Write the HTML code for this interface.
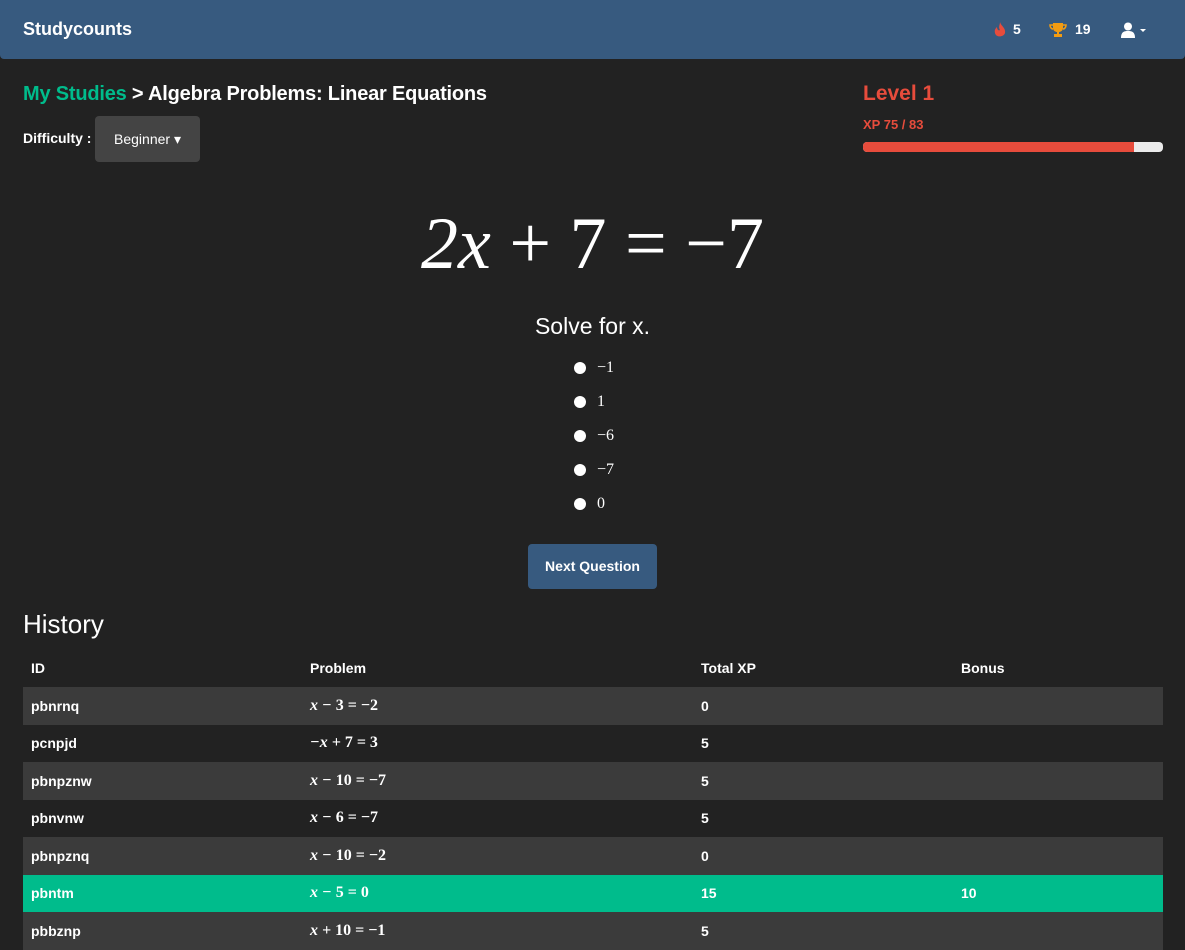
<!DOCTYPE html>
<html><head><meta charset="utf-8"><style>
body{margin:0;background:#222;color:#fff;font-family:"Liberation Sans",sans-serif;width:1185px;height:948px;overflow:hidden;position:relative}
.nav{position:absolute;left:0;top:0;width:1185px;height:59px;background:#375a7f;border-radius:0 0 4px 4px}
.brand{position:absolute;left:23px;top:19px;font-size:18px;font-weight:bold}
.ni{position:absolute;top:21px;font-size:14px;font-weight:bold}
.abs{position:absolute}
.math{font-family:"Liberation Serif",serif}
table{position:absolute;left:23px;top:649px;width:1140px;border-collapse:collapse;font-size:14px;font-weight:bold;table-layout:fixed}
td{height:37.5px;padding:0 8px;box-sizing:border-box}
tr.h td{height:38px}
tr.s td{background:#3b3b3b}
tr.g td{background:#00bc8c}
td.m{font-family:"Liberation Serif",serif;font-style:italic;font-weight:bold;font-size:16px}
.radio{position:absolute;left:574px;width:12px;height:12px;border-radius:50%;background:#fff}
.opt{position:absolute;left:597px;font-family:"Liberation Serif",serif;font-size:16px}
</style></head><body>
<div class="nav">
<div class="brand">Studycounts</div>
<svg class="abs" style="left:994px;top:22px" width="12" height="16" viewBox="0 0 12 16"><path d="M6 0C7 4 12 6 11 11 10 15 2 16 1 11 0 8 2 6 3 5 3 8 5 9 6 8 4 5 6 3 6 0Z" fill="#e74c3c"/></svg>
<div class="ni" style="left:1013px">5</div>
<svg class="abs" style="left:1049px;top:22px" width="18" height="16" viewBox="0 0 18 16"><path d="M4 1H14V6C14 9 11 10 10 10V12H13V15H5V12H8V10C7 10 4 9 4 6Z" fill="#f39c12"/><path d="M4 3H1C1 6 3 7 4 7M14 3H17C17 6 15 7 14 7" stroke="#f39c12" stroke-width="1.6" fill="none"/></svg>
<div class="ni" style="left:1075px">19</div>
<svg class="abs" style="left:1121px;top:22px" width="26" height="16" viewBox="0 0 26 16"><circle cx="7" cy="4.5" r="4" fill="#fff"/><path d="M0 16C0 10 3 9 7 9S14 10 14 16Z" fill="#fff"/><path d="M19 7H25L22 10Z" fill="#fff"/></svg>
</div>
<div class="abs" style="left:23px;top:83px;font-size:20px;font-weight:bold;letter-spacing:-0.2px"><span style="color:#00bc8c">My Studies</span> &gt; Algebra Problems: Linear Equations</div>
<div class="abs" style="left:23px;top:130px;font-size:14px;font-weight:bold">Difficulty :</div>
<div class="abs" style="left:95px;top:116px;width:105px;height:46px;background:#444;border-radius:4px;font-size:14px;line-height:46px;text-align:center">Beginner &#9662;</div>
<div class="abs" style="left:863px;top:82px;font-size:21px;font-weight:bold;color:#e74c3c">Level 1</div>
<div class="abs" style="left:863px;top:117px;font-size:13px;font-weight:bold;color:#e74c3c">XP 75 / 83</div>
<div class="abs" style="left:863px;top:142px;width:300px;height:10px;background:#ebebeb;border-radius:4px;overflow:hidden"><div style="width:271px;height:10px;background:#e74c3c"></div></div>
<div class="abs math" style="left:0;width:1185px;top:202px;text-align:center;font-size:74px"><i>2x</i> + 7 = &minus;7</div>
<div class="abs" style="left:0;width:1185px;top:313px;text-align:center;font-size:23px">Solve for x.</div>
<div class="radio" style="top:362px"></div><div class="opt" style="top:359px">&minus;1</div>
<div class="radio" style="top:396px"></div><div class="opt" style="top:393px">1</div>
<div class="radio" style="top:430px"></div><div class="opt" style="top:427px">&minus;6</div>
<div class="radio" style="top:464px"></div><div class="opt" style="top:461px">&minus;7</div>
<div class="radio" style="top:498px"></div><div class="opt" style="top:495px">0</div>
<div class="abs" style="left:528px;top:544px;width:129px;height:45px;background:#375a7f;border-radius:4px;font-size:14px;font-weight:bold;line-height:45px;text-align:center">Next Question</div>
<div class="abs" style="left:23px;top:609px;font-size:26px">History</div>
<table>
<tr class="h"><td style="width:279px">ID</td><td style="width:391px">Problem</td><td style="width:260px">Total XP</td><td>Bonus</td></tr>
<tr class="s"><td>pbnrnq</td><td class="m">x &minus; <span style="font-style:normal">3 = &minus;2</span></td><td>0</td><td></td></tr>
<tr><td>pcnpjd</td><td class="m">&minus;x + <span style="font-style:normal">7 = 3</span></td><td>5</td><td></td></tr>
<tr class="s"><td>pbnpznw</td><td class="m">x &minus; <span style="font-style:normal">10 = &minus;7</span></td><td>5</td><td></td></tr>
<tr><td>pbnvnw</td><td class="m">x &minus; <span style="font-style:normal">6 = &minus;7</span></td><td>5</td><td></td></tr>
<tr class="s"><td>pbnpznq</td><td class="m">x &minus; <span style="font-style:normal">10 = &minus;2</span></td><td>0</td><td></td></tr>
<tr class="g"><td>pbntm</td><td class="m">x &minus; <span style="font-style:normal">5 = 0</span></td><td>15</td><td>10</td></tr>
<tr class="s"><td>pbbznp</td><td class="m">x + <span style="font-style:normal">10 = &minus;1</span></td><td>5</td><td></td></tr>
</table>
</body></html>
